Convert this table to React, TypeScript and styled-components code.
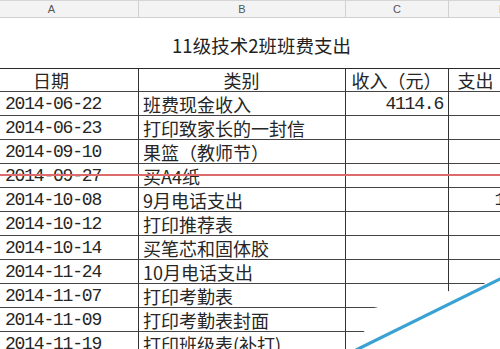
import React from 'react';
import styled, { createGlobalStyle } from 'styled-components';

const GlobalStyle = createGlobalStyle`
  html, body {
    margin: 0;
    padding: 0;
    background: #fff;
    overflow: hidden;
  }
  #root {
    width: 500px;
    height: 349px;
    overflow: hidden;
    position: relative;
  }
`;

const CJK = `"Noto Sans CJK SC", "Noto Sans", sans-serif`;
const MONO = `"Liberation Mono", "Noto Sans CJK SC", monospace`;

const Sheet = styled.div`
  display: grid;
  grid-template-columns: 174px 207px 103px 109px;
  grid-template-rows: 18px 50px;
  grid-auto-rows: 24px;
  margin-left: -35px;
  width: 593px;
  color: #262626;
`;

const ColHead = styled.div`
  height: 18px;
  box-sizing: border-box;
  background: #f3f3f3;
  border-top: 1px solid #d6d6d6;
  border-right: 1px solid #d0d0d0;
  border-bottom: 1px solid #cfcfcf;
  display: flex;
  align-items: center;
  justify-content: center;
  font: 11px "Liberation Sans", Arial, sans-serif;
  color: #555;
`;

const Title = styled.div`
  grid-column: 1 / -1;
  height: 50px;
  box-sizing: border-box;
  display: flex;
  align-items: center;
  justify-content: center;
  padding-top: 4px;
  font: 18.5px ${CJK};
  color: #222;
`;

const Cell = styled.div<{ $align?: 'left' | 'right' | 'center'; $mono?: boolean; $head?: boolean }>`
  height: 24px;
  box-sizing: border-box;
  border-right: 1px solid #333;
  border-bottom: 1px solid #444;
  border-top: ${(p) => (p.$head ? '1px solid #2a2a2a' : 'none')};
  display: flex;
  align-items: center;
  justify-content: ${(p) =>
    p.$align === 'right' ? 'flex-end' : p.$align === 'center' ? 'center' : 'flex-start'};
  padding: 0 5px 0 4px;
  white-space: nowrap;
  overflow: hidden;
  font: ${(p) => (p.$mono ? `18px ${MONO}` : `18px ${CJK}`)};
  letter-spacing: ${(p) => (p.$mono ? '-1.2px' : '0')};
  line-height: 1;
`;

const DateCell = styled(Cell)`
  padding-left: 40px;
`;

const StrikeLine = styled.div`
  position: absolute;
  left: 0;
  top: 174px;
  width: 500px;
  height: 2px;
  background: #de6b6b;
`;

const Curl = styled.div`
  position: absolute;
  inset: 0;
  background: #fff;
  clip-path: polygon(500px 268px, 484px 284px, 449px 291px, 374px 308px, 364px 332px, 356px 349px, 500px 349px);
`;

const CurlEdge = styled.svg`
  position: absolute;
  left: 0;
  top: 0;
  pointer-events: none;
`;

type Row = { date: string; item: string; income?: string; expense?: string };

const rows: Row[] = [
  { date: '2014-06-22', item: '班费现金收入', income: '4114.6' },
  { date: '2014-06-23', item: '打印致家长的一封信' },
  { date: '2014-09-10', item: '果篮（教师节）' },
  { date: '2014-09-27', item: '买A4纸' },
  { date: '2014-10-08', item: '9月电话支出', expense: '100.00' },
  { date: '2014-10-12', item: '打印推荐表' },
  { date: '2014-10-14', item: '买笔芯和固体胶' },
  { date: '2014-11-24', item: '10月电话支出' },
  { date: '2014-11-07', item: '打印考勤表' },
  { date: '2014-11-09', item: '打印考勤表封面' },
  { date: '2014-11-19', item: '打印班级表(补打)' },
];

export default function App() {
  return (
    <>
      <GlobalStyle />
      <Sheet>
        <ColHead>A</ColHead>
        <ColHead>B</ColHead>
        <ColHead>C</ColHead>
        <ColHead>D</ColHead>
        <Title>11级技术2班班费支出</Title>
        <Cell $head $align="center">日期</Cell>
        <Cell $head $align="center">类别</Cell>
        <Cell $head $align="center">收入（元）</Cell>
        <Cell $head $align="center">支出（元）</Cell>
        {rows.map((r) => (
          <React.Fragment key={r.date + r.item}>
            <DateCell $mono>{r.date}</DateCell>
            <Cell>{r.item}</Cell>
            <Cell $mono $align="right">{r.income}</Cell>
            <Cell $mono $align="right">{r.expense}</Cell>
          </React.Fragment>
        ))}
      </Sheet>
      <StrikeLine />
      <Curl />
      <CurlEdge width="500" height="349" viewBox="0 0 500 349">
        <line x1="356" y1="350" x2="502" y2="278" stroke="#3aa2d2" strokeWidth="3.2" />
      </CurlEdge>
    </>
  );
}
